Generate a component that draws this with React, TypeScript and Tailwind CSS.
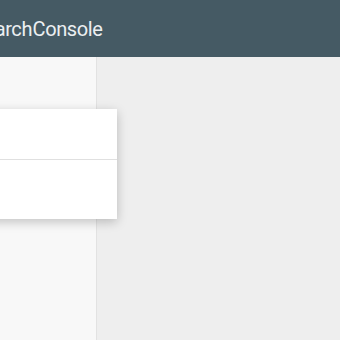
export default function App() {
    return (
        <div className="w-[340px] h-[340px] overflow-hidden flex flex-col bg-[#eeeeee]" style={{ fontFamily: 'Roboto, "Open Sans", sans-serif' }}>
            <header className="h-[57px] shrink-0 bg-[#455a64] flex items-center overflow-hidden">
                <span className="ml-[-27px] whitespace-nowrap text-[20px] tracking-[-0.4px] [word-spacing:-4px] text-[#eceff1]">
                    Search Console
                </span>
            </header>
            <div className="flex flex-1 min-h-0">
                <aside className="w-[97px] shrink-0 bg-[#f8f8f8] border-r border-[#e2e2e2] relative">
                    <div className="absolute left-[-20px] top-[52px] w-[137px] bg-white shadow-[0_3px_10px_rgba(0,0,0,0.22)]">
                        <div className="h-[51px] border-b border-[#e0e0e0]" />
                        <div className="h-[59px]" />
                    </div>
                </aside>
                <main className="flex-1" />
            </div>
        </div>
    );
}
